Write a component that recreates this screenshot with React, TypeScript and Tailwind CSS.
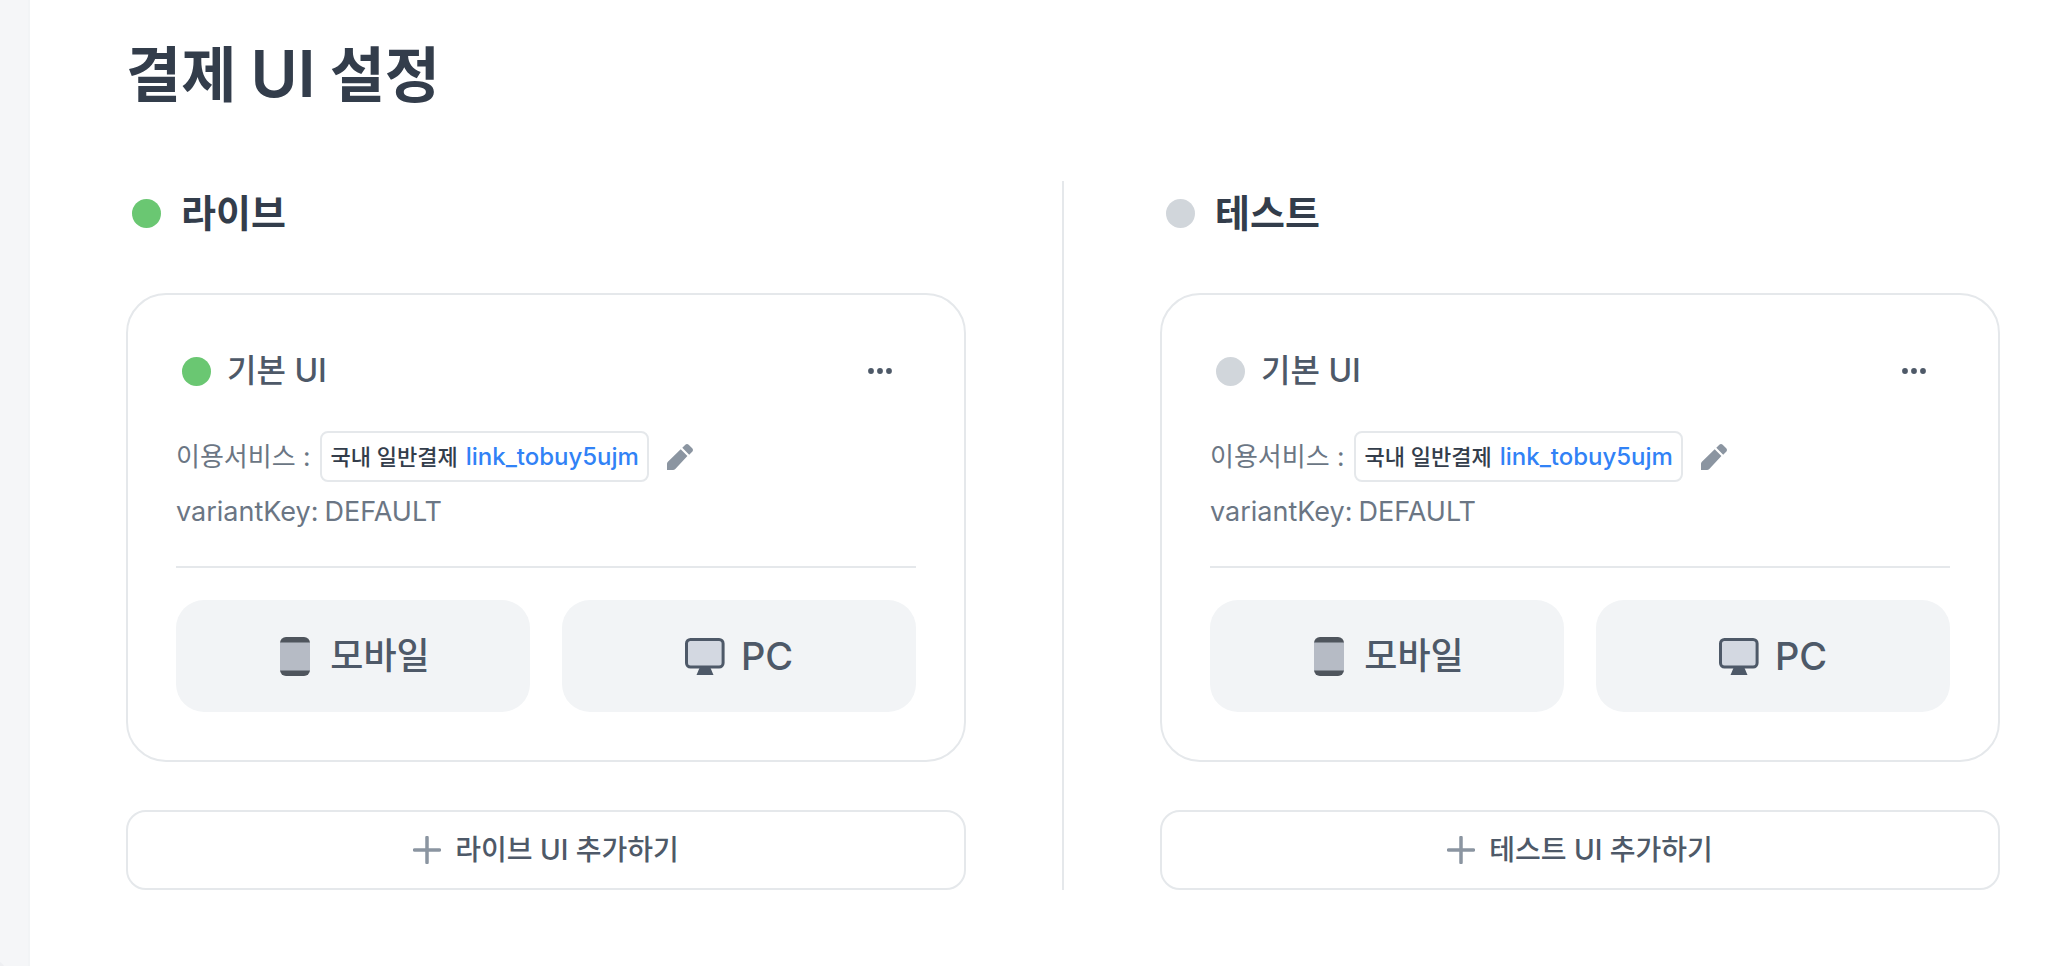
import { useId } from "react";

type Mode = {
  name: string;
  dot: string;
  card: string;
  add: string;
};

const modes: Mode[] = [
  { name: "라이브", dot: "bg-[#6ac772]", card: "기본 UI", add: "라이브 UI 추가하기" },
  { name: "테스트", dot: "bg-[#d1d6db]", card: "기본 UI", add: "테스트 UI 추가하기" },
];

function PencilIcon() {
  return (
    <svg width="26" height="26" viewBox="0 0 26 26" fill="#8b95a1" aria-hidden="true">
      <path d="M0 26v-6.200c0-.8.3-1.500.9-2.100L13.700 5.300l6.700 6.700L8.300 24.900c-.6.7-1.400 1.100-2.300 1.100z" />
      <path d="M15.300 3.700 18.300.8c1-1 2.400-1 3.400 0l3.500 3.500c1 1 1 2.400 0 3.400l-3 3z" />
    </svg>
  );
}

function MobileIcon() {
  return (
    <svg width="30" height="39" viewBox="0 0 30 39" aria-hidden="true">
      <rect width="30" height="39" rx="6" fill="#4f555d" />
      <rect y="5.500" width="30" height="28" fill="#b6bbc5" />
    </svg>
  );
}

function PcIcon() {
  return (
    <svg width="40" height="37" viewBox="0 0 40 37" aria-hidden="true">
      <rect x="1.500" y="1.500" width="36.600" height="27.500" rx="4" fill="#d3d8e1" stroke="#4e5968" strokeWidth="3" />
      <path d="M14.500 30h11l3 7h-17z" fill="#4e5968" />
    </svg>
  );
}

function Section({ mode }: { mode: Mode }) {
  const id = useId();
  return (
    <section aria-labelledby={id} className="flex min-w-0 flex-1 flex-col">
      <div className="flex h-16 items-center gap-5 pl-1.5">
        <span className={`size-[29px] rounded-full ${mode.dot}`} />
        <h2 id={id} className="text-[38px] font-bold leading-[48px] text-[#333d4b]">
          {mode.name}
        </h2>
      </div>

      <article className="mt-12 rounded-[40px] border-2 border-[#e5e8eb] p-12">
        <header className="flex h-14 items-center justify-between pl-1.5 pr-6">
          <div className="flex items-center gap-4">
            <span className={`size-[29px] rounded-full ${mode.dot}`} />
            <h3 className="text-[32px] font-medium leading-[48px] text-[#4e5968]">{mode.card}</h3>
          </div>
          <button type="button" aria-label="더보기">
            <svg width="24" height="24" viewBox="0 0 24 24" fill="#4e5968" aria-hidden="true">
              <circle cx="3" cy="12" r="2.900" />
              <circle cx="12" cy="12" r="2.900" />
              <circle cx="21" cy="12" r="2.900" />
            </svg>
          </button>
        </header>

        <dl className="mt-8 border-b-2 border-[#e5e8eb] pb-8 text-[#6b7684]">
          <div className="flex items-center">
            <dt className="text-[26px] leading-[48px]">이용서비스 :</dt>
            <dd className="ml-2.5 flex items-center gap-[18px]">
              <span className="flex h-[51px] items-center gap-2 rounded-lg border-2 border-[#e5e8eb] px-2 font-medium">
                <span className="text-[22px] leading-8 text-[#333d4b]">국내 일반결제</span>
                <a href="#link" className="text-[24px] leading-8 text-[#3182f6]">
                  link_tobuy5ujm
                </a>
              </span>
              <button type="button" aria-label="수정">
                <PencilIcon />
              </button>
            </dd>
          </div>
          <div className="mt-2 flex gap-1.5 text-[27px] leading-[44px]">
            <dt>variantKey:</dt>
            <dd>DEFAULT</dd>
          </div>
        </dl>

        <div className="mt-8 grid grid-cols-2 gap-8 font-medium leading-[48px] text-[#4e5968]">
          <button
            type="button"
            className="flex h-28 items-center justify-center gap-5 rounded-[28px] bg-[#f2f4f6] pl-1 text-[36px]"
          >
            <MobileIcon />
            모바일
          </button>
          <button
            type="button"
            className="flex h-28 items-center justify-center gap-4 rounded-[28px] bg-[#f2f4f6] text-[38px]"
          >
            <PcIcon />
            PC
          </button>
        </div>
      </article>

      <button
        type="button"
        className="mt-12 flex h-20 items-center justify-center gap-3.5 rounded-[20px] border-2 border-[#e5e8eb] text-[28px] font-medium leading-10 text-[#4e5968]"
      >
        <svg width="28" height="28" viewBox="0 0 28 28" stroke="#8b95a1" strokeWidth="3.500" strokeLinecap="round" aria-hidden="true">
          <path d="M14 1.500v25M1.500 14h25" />
        </svg>
        {mode.add}
      </button>
    </section>
  );
}

export default function App() {
  return (
    <div className="flex min-h-screen bg-white font-[Inter,'Noto_Sans_CJK_KR',sans-serif]">
      <aside className="relative w-[30px] shrink-0 overflow-hidden border-r-2 border-[#f2f4f6] bg-[#f5f6f8]">
        <span className="absolute -bottom-5 -left-5 size-[26px] rounded-full bg-[#eeeff2]" />
      </aside>
      <main className="min-w-0 flex-1 pl-24 pr-14 pt-8">
        <h1 className="text-[60px] font-bold leading-[84px] text-[#333d4b]">
          결제 <span className="text-[64px] font-semibold">UI</span> 설정
        </h1>
        <div className="mt-16 flex gap-24">
          <Section mode={modes[0]} />
          <div className="w-0.5 shrink-0 bg-[#e5e8eb]" />
          <Section mode={modes[1]} />
        </div>
      </main>
    </div>
  );
}
